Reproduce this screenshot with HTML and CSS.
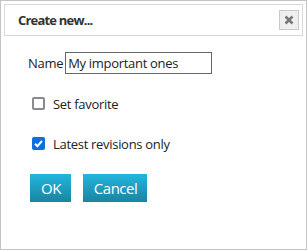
FILE: index.html
```html
<!DOCTYPE html>
<html lang="en">
<head>
    <meta charset="UTF-8">
    <title>Create new</title>
    <link rel="stylesheet" href="styles.css">
</head>
<body>
    <div class="dialog">
        <div class="dialog-header">
            <span class="dialog-title">Create new...</span>
            <button class="close-btn" title="Close">
                <svg width="10" height="10" viewBox="0 0 10 10">
                    <path d="M1.5 1.5 L8.5 8.5 M8.5 1.5 L1.5 8.5" stroke="#777" stroke-width="2.6"/>
                </svg>
            </button>
        </div>
        <div class="dialog-body">
            <div class="name-row">
                <label for="nameInput">Name</label>
                <input type="text" id="nameInput" value="My important ones">
            </div>
            <label class="check-row">
                <span class="check-box"></span>
                Set favorite
            </label>
            <label class="check-row">
                <span class="check-box checked">
                    <svg width="13" height="13" viewBox="0 0 13 13">
                        <path d="M3 6.8 L5.4 9.2 L10 3.8" stroke="#fff" stroke-width="2" fill="none"/>
                    </svg>
                </span>
                Latest revisions only
            </label>
            <div class="buttons">
                <button class="btn">OK</button>
                <button class="btn">Cancel</button>
            </div>
        </div>
    </div>
</body>
</html>
```

FILE: styles.css
```css
body {
    margin: 0;
    font-family: "Open Sans", Arial, sans-serif;
    font-size: 13px;
    letter-spacing: -0.3px;
    color: #222;
    background-color: #fff;
}
.dialog {
    width: 307px;
    height: 250px;
    box-sizing: border-box;
    border: 1px solid #c4c4c4;
    padding: 3px 3px 0 3px;
}
.dialog-header {
    height: 32px;
    box-sizing: border-box;
    border: 1px solid #d8d8d8;
    display: flex;
    align-items: center;
    justify-content: space-between;
    padding: 0 3px 0 13px;
}
.dialog-title {
    font-weight: bold;
    font-size: 13px;
    letter-spacing: -0.8px;
    color: #333;
}
.close-btn {
    width: 20px;
    height: 20px;
    padding: 0;
    border: 1px solid #c8c8c8;
    background-color: #efefef;
    display: flex;
    align-items: center;
    justify-content: center;
}
.dialog-body {
    padding: 16px 0 0 24px;
}
.name-row {
    display: flex;
    align-items: center;
    gap: 2px;
}
.name-row input {
    width: 147px;
    height: 22px;
    box-sizing: border-box;
    border: 1px solid #666;
    padding: 0 2px;
    font-family: inherit;
    font-size: 13px;
    letter-spacing: -0.3px;
    color: #222;
}
.check-row {
    display: flex;
    align-items: center;
    gap: 8px;
    margin-left: 4px;
    height: 13px;
}
.check-row:first-of-type {
    margin-top: 23px;
}
.check-row + .check-row {
    margin-top: 27px;
}
.check-box {
    width: 13px;
    height: 13px;
    box-sizing: border-box;
    border: 2px solid #8a8a92;
    border-radius: 2px;
    display: inline-flex;
}
.check-box.checked {
    border: none;
    background-color: #0f6fdc;
}
.buttons {
    display: flex;
    gap: 12px;
    margin-top: 24px;
    margin-left: 2px;
}
.btn {
    height: 28px;
    padding: 0 10px 0 11px;
    border: none;
    color: #fff;
    font-family: inherit;
    font-size: 15px;
    letter-spacing: -0.5px;
    background: linear-gradient(#22b6dd, #1a84a2);
    cursor: pointer;
}
```
